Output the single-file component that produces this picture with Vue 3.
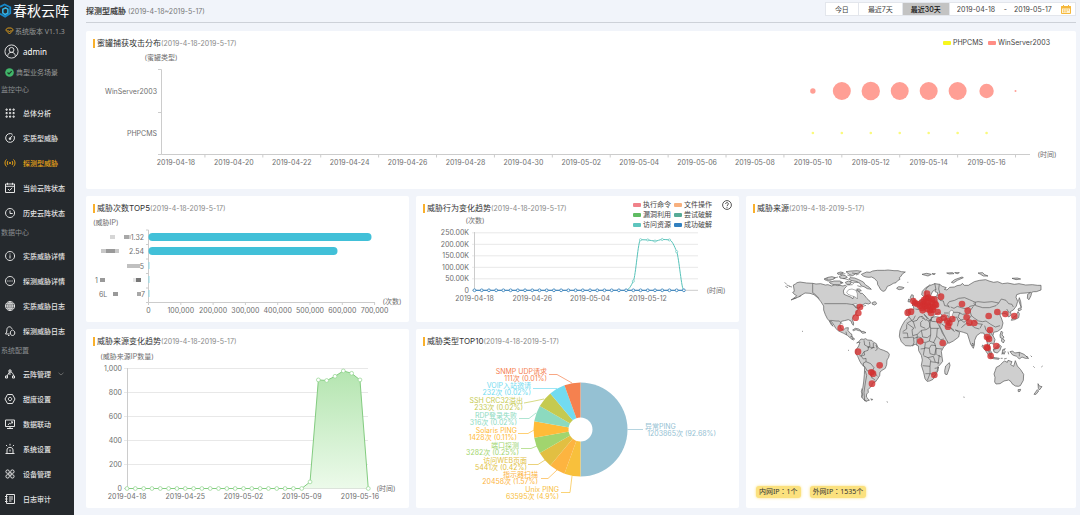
<template>
  <div class="layout">
    <aside class="sidebar">
      <div class="logo">
        <svg viewBox="0 0 14 16" width="13" height="16" fill="none">
          <path d="M0 3.5 5 1l6 3v6.5L5.5 14 0 11" stroke="#1687c9" stroke-width="2" />
          <path d="M5.5 4.5 8.5 6v4l-3 1.8L3 10V6.2l3-1.5" stroke="#35b5e8" stroke-width="1.6" />
        </svg>
        <span>春秋云阵</span>
      </div>
      <div class="version">
        <svg viewBox="0 0 9 8" width="9" height="8" fill="none" stroke="#d99a1c">
          <path d="M2.5 1h4L8.3 3 4.5 7 .7 3ZM2.5 3l2 2 2-2" />
        </svg>
        <span>系统版本 V1.1.3</span>
      </div>
      <div class="user">
        <svg viewBox="0 0 16 16" width="15" height="15" fill="none" stroke="#e8e8e8">
          <circle cx="8" cy="8" r="7" />
          <circle cx="8" cy="6.3" r="2.6" />
          <path d="M4 12.6c.3-2.4 1.6-3.7 4-3.7s3.7 1.3 4 3.7" />
        </svg>
        <span>admin</span>
      </div>
      <div class="scene">
        <svg viewBox="0 0 9 9" width="9" height="9">
          <circle cx="4.5" cy="4.5" r="4.3" fill="#41b56a" />
          <path d="m2.5 4.5 1.5 1.5 2.7-2.8" fill="none" stroke="#1d3a28" stroke-width="1.2" />
        </svg>
        <span>典型业务场景</span>
      </div>
      <nav>
        <template v-for="group in menu" :key="group.title">
          <h3 class="group-title">{{ group.title }}</h3>
          <a
            v-for="item in group.items"
            :key="item.label"
            href="#"
            class="menu-item"
            :class="{ active: item.active }"
          >
            <svg viewBox="0 0 12 12" width="12" height="12" fill="none" stroke="currentColor">
              <path :d="icons[item.icon]" />
            </svg>
            <span>{{ item.label }}</span>
            <svg v-if="item.arrow" viewBox="0 0 6 4" width="6" height="4" fill="none" stroke="#777">
              <path d="m.5.8 2.5 2.2L5.5.8" stroke-width=".8" />
            </svg>
          </a>
        </template>
      </nav>
    </aside>

    <main class="main">
      <header class="topbar">
        <h1>探测型威胁 <small>(2019-4-18~2019-5-17)</small></h1>
        <div class="range">
          <button
            v-for="r in ranges"
            :key="r"
            type="button"
            :class="{ selected: r === range }"
            @click="range = r"
          >{{ r }}</button>
          <div class="dates">
            <input v-model="start" type="text" aria-label="开始日期">
            <span>-</span>
            <input v-model="end" type="text" aria-label="结束日期">
            <button type="button" class="calendar" aria-label="选择日期">
              <svg viewBox="0 0 10 9" width="10" height="9">
                <path d="M.5 1.5h9v7h-9Z" fill="#fff3d6" stroke="#f5b83d" />
                <path d="M.5 1.5h9v1.5h-9ZM2.5 0v2M7.5 0v2" fill="#f5b83d" stroke="#f5b83d" />
                <path d="M2 5h1.5M4.3 5h1.5M6.5 5H8M2 6.8h1.5M4.3 6.8h1.5" stroke="#f5b83d" />
              </svg>
            </button>
          </div>
        </div>
      </header>

      <div class="board">
        <section class="card wide">
          <div class="card-head">
            <h2>蜜罐捕获攻击分布<small>{{ period }}</small></h2>
            <ul class="legend inline">
              <li><i class="yellow"></i>PHPCMS</li>
              <li><i class="salmon"></i>WinServer2003</li>
            </ul>
          </div>
          <svg class="chart" viewBox="0 0 990 138">
            <path class="axis" d="M75.5 18.5V103.5H944M72 18.5h3.5M72 61.5h3.5M72 103.5h3.5" />
            <path v-for="n in 15" :key="n" class="axis" :d="`M${bandX(2 * n - 1)} 103.5v3`" />
            <text x="75" y="6" class="mid">(蜜罐类型)</text>
            <text x="71" y="40" class="end">WinServer2003</text>
            <text x="71" y="82" class="end">PHPCMS</text>
            <text v-for="n in 15" :key="n" :x="bandX(2 * n - 2)" y="111" class="mid">{{ day(2 * n - 2) }}</text>
            <text x="961" y="103" class="mid">(时间)</text>
            <circle v-for="(r, i) in winServer" :key="i" :cx="bandX(22 + i)" cy="40" :r="r" fill="#ff9f95" />
            <circle v-for="n in 7" :key="n" :cx="bandX(21 + n)" cy="82" r="1.3" fill="#fafa7c" />
          </svg>
        </section>

        <section class="card">
          <div class="card-head">
            <h2>威胁次数TOP5<small>{{ period }}</small></h2>
          </div>
          <svg class="chart" viewBox="0 0 323 106">
            <path class="axis" d="M62.5 14V86.5H289" />
            <path v-for="n in 6" :key="n" class="axis" :d="`M60 ${14.5 * n - 0.5}h2.5`" />
            <g v-for="n in 8" :key="n">
              <path class="axis" :d="`M${30.2 + 32.3 * n} 86.5v2.5`" />
              <text :x="30.2 + 32.3 * n" y="94" class="mid">{{ ((n - 1) * 100000).toLocaleString('en-US') }}</text>
            </g>
            <rect x="62.5" y="17" width="223" height="8" rx="4" fill="#41c0d8" />
            <rect x="62.5" y="31" width="189" height="8" rx="4" fill="#41c0d8" />
            <path d="M63 46v7M63 60v7M63 74v7" stroke="#8edbe8" />
            <text x="7" y="6">(威胁IP)</text>
            <text x="58" y="21" class="end">1.32</text>
            <text x="58" y="35" class="end">2.54</text>
            <text x="58" y="50" class="end">5</text>
            <text x="9" y="64">1</text>
            <text x="13" y="78">6L</text>
            <text x="59" y="78" class="end">7</text>
            <rect
              v-for="(m, i) in masks"
              :key="i"
              :x="m[0]"
              :y="m[1]"
              :width="m[2]"
              height="4"
              :fill="m[3]"
            />
            <text x="306" y="85" class="mid">(次数)</text>
          </svg>
        </section>

        <section class="card">
          <div class="card-head">
            <h2>威胁行为变化趋势<small>{{ period }}</small></h2>
          </div>
          <ul class="legend stacked">
            <li v-for="l in behaviors" :key="l.name"><i :class="l.color"></i>{{ l.name }}</li>
          </ul>
          <button type="button" class="help" aria-label="帮助">
            <svg viewBox="0 0 10 10" width="10" height="10" fill="none" stroke="#444" stroke-width=".9">
              <circle cx="5" cy="5" r="4.4" />
              <path d="M3.6 4c0-1.900 2.800-1.900 2.800-.1C6.400 4.900 5 5 5 6.200M5 7v.9" />
            </svg>
          </button>
          <svg class="chart" viewBox="0 0 323 106">
            <g v-for="n in 6" :key="n">
              <path :class="n === 1 ? 'axis' : 'grid'" :d="`M56 ${85.8 - 11.5 * n}H282`" />
              <text x="53" :y="85.8 - 11.5 * n" class="end">{{ n === 1 ? 0 : (n - 1) * 50 + '.00K' }}</text>
            </g>
            <path class="axis" d="M58.5 16V74" />
            <text x="59" y="4" class="mid">(次数)</text>
            <text v-for="n in [0, 8, 16, 24]" :key="n" :x="58.5 + 7.22 * n" y="82" class="mid">{{ day(n) }}</text>
            <text x="300" y="74" class="mid">(时间)</text>
            <path d="M58.5 74.3H268" stroke="#2b7bb9" />
            <path :d="smooth(visits)" fill="none" stroke="#56c2b9" />
            <circle
              v-for="(p, i) in visits.slice(1, -1)"
              :key="'v' + i"
              :cx="p[0]"
              :cy="p[1]"
              r="1.1"
              fill="#fff"
              stroke="#56c2b9"
              stroke-width=".6"
            />
            <circle
              v-for="n in 30"
              :key="n"
              :cx="51.28 + 7.22 * n"
              cy="74.3"
              r="1.4"
              fill="#fff"
              stroke="#2b7bb9"
              stroke-width=".8"
            />
          </svg>
        </section>

        <section class="card map-card">
          <div class="card-head">
            <h2>威胁来源<small>{{ period }}</small></h2>
          </div>
          <svg class="chart" viewBox="18 63 990 792">
            <g class="land">
              <path v-for="(d, i) in land" :key="i" :d="d" />
            </g>
            <path v-for="(d, i) in lakes" :key="'l' + i" :d="d" class="lake" />
            <path v-for="(d, i) in borders" :key="'b' + i" :d="d" class="border" />
            <circle v-for="(p, i) in sources" :key="'s' + i" :cx="p[0]" :cy="p[1]" r="10" class="source" />
          </svg>
          <div class="tags">
            <span>内网IP：1个</span>
            <span>外网IP：1535个</span>
          </div>
        </section>

        <section class="card">
          <div class="card-head">
            <h2>威胁来源变化趋势<small>{{ period }}</small></h2>
          </div>
          <svg class="chart" viewBox="0 0 323 159">
            <defs>
              <linearGradient id="area" x1="0" y1="0" x2="0" y2="1">
                <stop offset="0" stop-color="#b4e5b0" />
                <stop offset="1" stop-color="#ecfaea" />
              </linearGradient>
            </defs>
            <g v-for="n in 6" :key="n">
              <path :class="n === 1 ? 'axis' : 'grid'" :d="`M38 ${163.5 - 24 * n}H282`" />
              <text x="36" :y="163.5 - 24 * n" class="end">{{ ((n - 1) * 200).toLocaleString('en-US') }}</text>
            </g>
            <path class="axis" d="M41.5 19V139" />
            <text x="41" y="7" class="mid">(威胁来源IP数量)</text>
            <text v-for="n in [0, 7, 14, 21, 28]" :key="n" :x="41 + 8.32 * n" y="147" class="mid">{{ day(n) }}</text>
            <text x="300" y="139" class="mid">(时间)</text>
            <polygon :points="ipPoints" fill="url(#area)" />
            <polyline :points="ipPoints" fill="none" stroke="#83cc80" />
            <circle
              v-for="(p, i) in ips"
              :key="i"
              :cx="p[0]"
              :cy="p[1]"
              r="1.9"
              fill="#fff"
              stroke="#8fd48c"
              stroke-width=".7"
            />
          </svg>
        </section>

        <section class="card">
          <div class="card-head">
            <h2>威胁类型TOP10<small>{{ period }}</small></h2>
          </div>
          <svg class="chart" viewBox="0 0 323 159">
            <path d="M164.5 33.5a47 47 0 0 1 0 94Z" fill="#95c1d3" />
            <path d="M211.5 80.5H227" stroke="#95c1d3" stroke-width=".7" />
            <text x="229" y="77" fill="#95c1d3" class="tinted">异常PING</text>
            <text x="300" y="84" fill="#95c1d3" class="tinted end">1203865次 (92.68%)</text>
            <g v-for="(s, i) in slices" :key="s.name">
              <path :d="slicePath(i)" :fill="s.color" />
              <polyline :points="s.line" fill="none" :stroke="s.color" stroke-width=".7" />
              <text :x="s.x" :y="s.y" :fill="s.color" class="tinted end">{{ s.name }}</text>
              <text :x="s.x" :y="s.y + 7" :fill="s.color" class="tinted end">{{ s.value }}</text>
            </g>
            <circle cx="164.5" cy="80.5" r="12" fill="#fff" />
          </svg>
        </section>
      </div>
    </main>
  </div>
</template>

<script setup>
import { ref } from 'vue'

const period = '(2019-4-18-2019-5-17)'
const ranges = ['今日', '最近7天', '最近30天']
const range = ref('最近30天')
const start = ref('2019-04-18')
const end = ref('2019-05-17')

const menu = [
  {
    title: '监控中心',
    items: [
      { label: '总体分析', icon: 'grid' },
      { label: '实质型威胁', icon: 'gauge' },
      { label: '探测型威胁', icon: 'signal', active: true },
      { label: '当前云阵状态', icon: 'calendar' },
      { label: '历史云阵状态', icon: 'clock' }
    ]
  },
  {
    title: '数据中心',
    items: [
      { label: '实质威胁详情', icon: 'info' },
      { label: '探测威胁详情', icon: 'dots' },
      { label: '实质威胁日志', icon: 'globe' },
      { label: '探测威胁日志', icon: 'bell' }
    ]
  },
  {
    title: '系统配置',
    items: [
      { label: '云阵管理', icon: 'nodes', arrow: true },
      { label: '甜度设置', icon: 'hexagon' },
      { label: '数据联动', icon: 'monitor' },
      { label: '系统设置', icon: 'alarm' },
      { label: '设备管理', icon: 'clover' },
      { label: '日志审计', icon: 'book' }
    ]
  }
]

const icons = {
  grid: [2, 5.5, 9].map((y) => [2, 5.5, 9].map((x) => `M${x} ${y}h1.2v1.200h-1.200Z`).join('')).join(''),
  gauge: 'M8.5 2.3A4.4 4.4 0 1 0 10 4M5.500 6.800 8.500 3.500M5.300 6h1.400v1.400H5.300Z',
  signal: 'M2.5 2.5c-2 2-2 5 0 7M9.5 2.5c2 2 2 5 0 7M4 4c-1 1-1 3 0 4M8 4c1 1 1 3 0 4M5.5 5.5h1v1h-1Z',
  calendar: 'M1.5 2h9v8.5h-9ZM1.5 4.3h9M3.5.8v2M8.5.8v2M4 7l1.5 1.5L8.3 5.8',
  clock: 'M6 1.5a4.5 4.5 0 1 0 .1 0M6 3.5v3h2.7',
  info: 'M6 1.5a4.5 4.5 0 1 0 .1 0M6 5.3v3.2M6 3.5v1',
  dots: 'M6 1.5a4.5 4.5 0 1 0 .1 0M3.3 6h1.2M5.4 6h1.2M7.5 6h1.2',
  globe: 'M6 1.5a4.5 4.5 0 1 0 .1 0M6 1.5v9M1.5 6h9M2.4 3.8h7.2M2.4 8.2h7.2M6 1.5c-3 2.5-3 6.5 0 9M6 1.5c3 2.5 3 6.5 0 9',
  bell: 'M8 3.8C7 .8 3 1.3 2.9 4.5L2.7 7 1.5 9h4M4 10.5h1.5M8.5 5c1.5.5 2.3 1.5 2.3 3S9.8 10.5 8.5 10.5 6.3 9.5 6.3 8 7 5.5 8.5 5',
  nodes: 'M5 2h2v2H5ZM1.5 8h2v2h-2ZM8.5 8h2v2h-2ZM5.5 4 3 8M6.5 4c2 .5 3 2 3 4M5.8 4.5 6 7',
  hexagon: 'M3.5 1.5h5L11 6l-2.5 4.5h-5L1 6ZM6 4.3a1.7 1.7 0 1 0 .1 0',
  monitor: 'M1.5 2h9v6.5h-9ZM3 10.5h6M6 8.5v2M4 7l1.5-1.8 1 .8L8.5 3.8M7 3.8h1.5v1.5',
  alarm: 'M1.5 10.5h9M3 10V7c0-3.5 6-3.5 6 0v3M6 6.5v2M6 .8v1.7M2 2l1.2 1.2M10 2 8.800 3.200',
  clover: 'M5.3 5.3H3.4A1.7 1.7 0 1 1 5.3 3.5ZM6.7 5.3V3.5A1.7 1.7 0 1 1 8.6 5.3ZM5.3 6.7v1.9A1.7 1.7 0 1 1 3.4 6.7ZM6.7 6.7h1.9A1.7 1.7 0 1 1 6.7 8.6Z',
  book: 'M2.5 1.5h8v9h-8ZM1 3.5h2.5M1 6h2.5M1 8.5h2.5M5 4h4M5 6h4M5 8h2.5'
}

const behaviors = [
  { name: '执行命令', color: 'red' },
  { name: '文件操作', color: 'orange' },
  { name: '漏洞利用', color: 'green' },
  { name: '尝试破解', color: 'jade' },
  { name: '访问资源', color: 'teal' },
  { name: '成功破解', color: 'blue' }
]

// 从 2019-04-18 起的第 n 天
function day(n) {
  return new Date(Date.UTC(2019, 3, 18 + n)).toISOString().slice(0, 10)
}

const bandX = (i) => 75.5 + 28.95 * (i + 0.5)
const winServer = [2.7, 9, 9.2, 9, 9, 9, 7.2, 1]

// 打码的 IP 片段: x, y, 宽, 颜色
const masks = [
  [24, 19, 5, '#d6d6d6'],
  [38, 19, 5, '#a8a8a8'],
  [43, 19, 2, '#d0d0d0'],
  [15, 33, 5, '#c8c8c8'],
  [20, 33, 9, '#999'],
  [29, 33, 4, '#c8c8c8'],
  [41, 48, 13, '#c0c0c0'],
  [14, 62, 5, '#999'],
  [47, 62, 3, '#e6e6e6'],
  [50, 62, 5, '#777'],
  [27, 76, 5, '#999'],
  [51, 76, 4, '#a8a8a8']
]

const visits = [0, 40, 220, 219, 214, 221, 219, 168, 0].map((v, i) => [
  58.5 + 7.22 * (i + 21),
  74.3 - v * 0.23
])

// 单调平滑曲线
function smooth(pts) {
  const slope = (i) => (pts[i + 1][1] - pts[i][1]) / (pts[i + 1][0] - pts[i][0])
  const tangent = (i) => {
    if (i === 0 || i === pts.length - 1) return 0
    const a = slope(i - 1)
    const b = slope(i)
    return a * b <= 0 ? 0 : (2 * a * b) / (a + b)
  }
  let d = `M${pts[0][0]} ${pts[0][1]}`
  for (let i = 0; i < pts.length - 1; i++) {
    const [x1, y1] = pts[i]
    const [x2, y2] = pts[i + 1]
    const dx = (x2 - x1) / 3
    d += `C${x1 + dx} ${y1 + dx * tangent(i)} ${x2 - dx} ${y2 - dx * tangent(i + 1)} ${x2} ${y2}`
  }
  return d
}

const ips = [...Array(22).fill(0), 55, 905, 900, 935, 980, 960, 905, 0].map((v, i) => [
  41 + 8.32 * i,
  139.5 - v * 0.12
])
const ipPoints = ips.map((p) => p.join(',')).join(' ')

const slices = [
  { name: 'Unix PING', value: '63595次 (4.9%)', color: '#f8c03c', x: 143, y: 140, line: '145,143.5 154,143.5 156,127' },
  { name: '指示器扫描', value: '20458次 (1.57%)', color: '#fdb440', x: 122, y: 125, line: '125,129.5 132,129.5 141,121' },
  { name: '访问WEB页面', value: '5441次 (0.42%)', color: '#e2bf42', x: 111, y: 111, line: '112,115.5 122,115.5 129,111' },
  { name: '端口探测', value: '3282次 (0.25%)', color: '#a1d56e', x: 103, y: 96, line: '105,99.5 115,99.5 121,97' },
  { name: 'Solaris PING', value: '1428次 (0.11%)', color: '#ffbb38', x: 101, y: 81, line: '102,84.5 112,84.5 118,81' },
  { name: 'RDP登录失败', value: '316次 (0.02%)', color: '#8cdabf', x: 101, y: 66, line: '103,69.5 113,69.5 120,64' },
  { name: 'SSH CRC32溢出', value: '233次 (0.02%)', color: '#c5ca50', x: 107, y: 51, line: '108,54 116,52.5 128,50' },
  { name: 'VOIP入站邀请', value: '232次 (0.02%)', color: '#72dbf0', x: 115, y: 36, line: '117,39.5 141,39.5' },
  { name: 'SNMP UDP请求', value: '111次 (0.01%)', color: '#f5814f', x: 131, y: 22, line: '133,25.5 141,25.5 156,34' }
]

function slicePath(i) {
  const at = (deg) => {
    const a = (deg * Math.PI) / 180
    return `${164.5 + 47 * Math.sin(a)} ${80.5 - 47 * Math.cos(a)}`
  }
  return `M164.5 80.5L${at(180 + 20 * i)}A47 47 0 0 1 ${at(200 + 20 * i)}Z`
}

const land = [
  // 北美
  'M160 270l6-3 5-4 9-2 6 1 14 2 18 1 10 2 14-1 14 4 8-1 11 4 10-4 8 3 7-1 9 2 7-3 4 4-6 6-4 8 2 10 12 5 10 4 4 5 3-7-3-8 4-8 8-3 7 3 4 6 6 0 8 8 6 8 9 8 3 4-7 4-10-2-9 5-8 5-2 6-5 4-2 9-6 7-5 5-2 8 4 10-1 7-4-5-3-8-8-4-12 3-9 2-4 9 2 12 8 5 7-6 8-1-1 9 7 8 4 2 1 10 8 5-4 3-9-6-9-8-11-6-15-7-9-8-4-8-9-13-5-3 6 10 4 8-5-5-7-12-5-6-6-12-5-14 0-12-9-14-9-11-11-9-12-4-15-1-10 6-10 6-14 6-8 3 12-8 5-5-7-4-5-6 5-3z',
  'M368 236l12-5 10 1 8-4 14-2 22 0 10-1 18 2 12 0 10 3 12 1-8 5-6 9-4 3 2 5-7 4-5 6-8 2-10 6-8 3-3 7-5 7-5 1-7-5-5-9-4-6-1-9-8-9-9-5-8 1-9-1-8-3-6-5z',
  'M318 230l14-2 20-1 12 2-8 5-10 3-8 5-9-3-5-4z',
  'M252 252l12-5 12-2 10 3-6 5-12 2-10 1z',
  'M268 262l14-4 18 0 8 5-10 6-16 0-10-3z',
  'M298 244l10-4 8 2 6 5-10 4-12-2z',
  'M330 248l14 1 12 5 14 7 6 8 12 8 6 6-12-2-10-6-8-2-4-8-12-6-12-2-10-4z',
  'M316 262l10-4 8 4-4 6-10 0z',
  'M350 282l8 0 6 5-8 2z',
  'M292 234l10-3 8 2-6 4-10 1z',
  'M470 279l6-4 10 1 6 2-4 4-10 2-6-2z',
  'M398 322l8-2 4 6-6 4-8-3z',
  'M338 405l8-5 10 2 8 6-8-1-8-3-8 3z',
  'M362 410l8-1 8 4-10 2z',
  // 南美
  'M350 444l6-4 7-8 8 1 6-2 6 4 12 1 6 6 8 4 4 10 6 6 12 4 13 6 4 6-2 9-5 8-1 14-4 11-10 6-6 5-1 11-7 11-6 8-9 4-1 6-6 7-6 6 1 8-5 5-1 9 5 5 4 5-9 2-9-5-5-8 1-14 2-10 3-20 2-22 1-24-9-7-6-10-6-14-6-9 1-10 8-12 4-12z',
  'M392 612l6 1-2 3z',
  // 非洲
  'M508 364l10-4 16-2 11 2 2 10 12 3 6 5 10-4 15 1 5 13 8 16 5 12 7 9 16 0 0 5-8 14-12 12-7 13 2 16 2 14-8 10-6 6 0 12-7 12-8 14-10 5-8 1-6-8-4-18-7-22 3-16-3-14-8-14-1-14-9-5-14 5-16-1-12-12-6-16 2-18 6-14 8-14z',
  'M628 503l2 8-4 14-5 14-6-2-1-10 3-14z',
  // 欧亚大陆
  'M500 356l0-13 22 0-2-9-4-4 13-5 9-7 9-5 9-1 2-8 4 0 0 6 11 0 9-4 9-3 2-10-8-3 2-7-9 6-6 12-4 8-7-5-9 1-7-6 2-10 10-11 12-6 16-6 14 2 8 6 12 4-6 5 8 2 8-8 14-1 8-4 12-2 4-5 6 6 12 0 8-5 10-6 16-4 18-2 10 4 14 4 12-2 14 6 16-2 20 4 14-2 20 4 20-1 16 2 10 0 0 14-14 5-8 0-6 2-2 10-6 12-5-4 1-12 9-6-14 2-16 1-12 4-2 8 5 12-4 14-9 12-9 5 3 10-8 6-6-9-9-2-12 3 5 11 5 15-4 16-12 9-12 3-2 10 6 12-4 14-8-4-6 6 3 15 6 9-2 5-8-13-3-14-3-18-9-20-10 0-11 8-6 14-1 14-3 10-8-12-5-16-5-16-12-4-14-4-10-3 13 7-3 14-16 12-14 7-7-11-8-16-6-13-6-12 2-12-14-1-12-1-2-11 13-3 17 2 4-6-10-8-13 6-8 10-6 8-8-10-10-9 11 14-6 4-10-12-10 2-6 10-13 4z',
  'M516 326l5-5-6-5-4-9 4-8 5 2 0 8 5 8 5 5-3 5z',
  'M504 320l2-8 5 2-1 7z',
  'M634 262l10-8 22-8 4 2-18 8-12 8z',
  'M546 238l14-3 14 3-10 5-8-2z',
  'M576 236l10 0-4 3z',
  'M620 234l18-1 4 3-14 1zM644 233l14 0-6 3z',
  'M714 234l14-1 6 6 10 4-14 0-8-5z',
  'M816 250l16-1 10 3-14 2z',
  'M838 308l4 12 2 18-4-10-4-12z',
  'M834 342l8-4 2 6-8 4zM834 350l4 6-2 12-12 6-10 2 4-8 10-6z',
  // 东南亚与大洋洲
  'M728 450l8 8 10 12 8 14-6 0-12-18-10-12zM752 486l14 2 12 2-2 3-16-2-10-3z',
  'M760 462l8-4 8-10 8 6-4 12-8 8-10-3z',
  'M788 464l8-3-4 5 4 4-4 8-3-6-3 6zM780 420l4-12 4 4-2 8 6 6-4 6 6 4-4 8-6-6 2-8-5-2z',
  'M810 470l8-2 6 6 14-2 14 6 14 12-10 0-10-4-8 6-8-8-12-4z',
  'M698 444l3 5-2 4-3-4z',
  'M782 490l6 0M792 492l8-2M804 470l2 8M872 482l4 4M880 514l4 4M904 516l4-3',
  'M766 526l3-9 11-6 8-9 6-4 8 4 2-6 12 4-4 9 9 5 5-17 6 16 10 11 9 14-1 18-9 16-6 2-9-1-10-7-3-6-7-5-14 3-12 8-12 1-4-6 1-14-3-10z',
  'M834 584l8-1-2 6-5 1z',
  'M894 566l4 7 8 2-8 10-3-5zM892 584l4 4-8 10-6 0z'
]

const lakes = [
  'M320 292l6-8 10-2 12 4 4 10 0 16-6-6-12-4-10-4z',
  'M628 350l8-5 5 6-4 8 3 12-6 1-6-10z',
  'M338 328l10-2 6 4-8 3zM346 336l6-1 0 6z'
]

const borders = [
  'M253 326H320l20 3 6 8 10 2 8-4 14-4M218 265v28l6 4 14 14M272 376l16 2 10 0 10 10M318 410l2 10M330 426l8-2M336 434l4-6',
  'M256 252l8 0M262 258l12 0M280 250l14-4M300 238l16-2M310 250l14 4M322 240l12 4M336 234l14 2M330 258l12 8M340 262l14 0M348 240l10-4M300 262l10 2M322 270l16-1M352 272l12 4',
  'M134 262l6 6M140 270l10 4M148 274l8 2M136 274l8 4M160 312l10-4M176 306l8-4',
  'M372 436l2 14 12 6-2 10-12 4 2 10-12 4M388 440l2 14-8 4M400 444l0 14-8 4M408 450l4 12-6 6M384 456l20 2M372 470l-8 12-6 0M364 484l6 8 8-2 0 10-8 4 0 10M378 500l14 6 10 12-4 8-16 2-6-10-6-6M376 528l4 14-4 22-4 28 2 24M398 526l8 10 6 8M396 548l10 8M392 536l4 14M366 580l-2 10 4 8-3 10M372 616l8 4',
  'M526 362l-6 12-18 10M500 384l22 16-6 4 2 18 14-4 12-12 14-2 10-6 4-26M548 376l-6 6 0 12 14 6M526 400l-6-20M500 388l0 14-12 8M488 414l14 0 2 14-14 0M504 428l16-2 2 16-4 12M522 430l12-4 10 2 4 14M532 418l-2 32M544 406l4 20 14 2 10-8 0-20M566 374l6 26 26 0M572 420l-4 18 16 6 4 16 18 2M548 442l10 0 10-4M592 400l-2 24 12 10 10-2M590 424l-10 20M556 444l-2 14 14 2 6-10 14 2M542 462l14-2M554 458l-4 22M568 460l2 16 14 4 4-20M550 482l14 6 16-4 6 18 12 2M548 512l22 2 2-18-8-8M570 514l0 22 10 2 12-12 4-10M570 536l-8 20M556 536l14 0M584 520l12-2M592 480l12 6M588 460l0 20M580 546l8-8M572 500l14 2M598 480l-4 28',
  'M570 268l-12 14-2 18M584 264l4 20M598 268l-2 14 4 14-4 8M592 306l8 10 10 2 4 14 14 2M556 312l4 24M570 310l2 30M584 308l-2 36M540 320l16 10 40 4M548 342l30-6M526 342l12 2',
  'M628 338l-6-10 6-8 16-4 12-6 18-2 14 6 18 8 0 8-16 4-10 8-16-4-12-4-10 6-10-4M704 322l10-2 18 2 24-2 20 4-8 8-20 6-20 0-20-6-8-8M776 324l8-12 14 4 8 10 10 2 4 8M700 334l-10 14 4 14 10 8 12 8 12 2 10-2 14 10 14 8 14-4M660 352l-6 14 8 8 10 8 16-12 6-8M640 368l10-2 6 14M652 394l4-16 16-6M664 398l16-14 14 6 10 8 14 4M700 376l14 10 14 2M726 388l-6 12M734 392l4 14M738 406l8 6 8 16-6 4-8-6M740 426l10 14M746 404l12 18M640 352l14 0 14 6 12-2M600 366l14-2 8 10 10 16M596 372l8 6 10-6M604 386l14 10 14 2 10 8M622 360l6 10M612 354l14 0M632 400l12 10',
  'M800 342l8 12M760 466l20-12M838 472v12M186 408l3 2M324 466l3 0M440 620l4 2M670 606l4 1M502 262l3 0M858 484l6 2'
]

const sources = [
  [360, 336], [355, 354], [347, 368], [302, 399],
  [354, 470], [419, 511], [394, 532], [399, 536], [396, 566],
  [541, 439], [608, 444], [583, 540],
  [503, 353], [513, 350],
  [561, 296], [603, 305], [520, 318], [525, 324], [532, 327], [540, 332],
  [546, 322], [552, 315], [558, 310], [565, 308], [574, 312], [583, 314],
  [550, 328], [558, 322], [566, 320], [575, 324], [585, 326], [546, 338],
  [548, 346], [556, 334], [564, 332], [572, 336], [580, 336], [588, 330],
  [562, 342], [570, 346], [578, 344], [573, 354], [593, 351],
  [598, 376], [612, 368], [622, 378], [637, 372], [628, 384], [624, 395],
  [666, 327], [683, 347], [680, 367], [688, 383], [703, 384],
  [746, 363], [772, 351], [796, 357], [823, 363],
  [750, 405], [741, 426], [747, 432], [743, 459], [740, 457], [769, 453], [752, 483]
]
</script>

<style>
body {
  margin: 0;
}
</style>

<style scoped>
.layout {
  display: flex;
  min-height: 100vh;
  background: #f1f4fa;
  color: #444;
  font-family: Inter, "Noto Sans CJK SC", sans-serif;
  font-size: 7px;
}

button,
input {
  font: inherit;
  color: inherit;
  border: 0;
  padding: 0;
  background: none;
}

h1,
h2,
h3,
ul {
  margin: 0;
  padding: 0;
  font-weight: 400;
  list-style: none;
}

.sidebar {
  flex: 0 0 74px;
  background: #25292d;
  color: #e4e4e4;
  font-family: "Noto Sans", "Noto Sans CJK SC", sans-serif;
}

.logo,
.version,
.user,
.scene,
.menu-item {
  display: flex;
  align-items: center;
  white-space: nowrap;
}

.logo {
  height: 22px;
  font-size: 14px;
  line-height: 22px;
  color: #fff;
}

.version {
  height: 18px;
  padding-left: 5px;
  gap: 1px;
  color: #999;
}

.user {
  height: 22px;
  padding-left: 4px;
  gap: 4px;
  font-size: 8px;
  color: #fff;
}

.scene {
  height: 20px;
  padding-left: 5px;
  gap: 2px;
  color: #999;
}

.group-title {
  height: 18px;
  padding-left: 1px;
  font-size: 7px;
  line-height: 16px;
  color: #8a8d90;
}

.menu-item {
  height: 25px;
  padding-left: 4px;
  gap: 7px;
  color: #e4e4e4;
  font-weight: 500;
  text-decoration: none;
}

.menu-item.active {
  color: #e8a317;
}

.main {
  flex: 1;
  min-width: 0;
  padding: 0 4px 7px 12px;
}

.topbar {
  display: flex;
  justify-content: space-between;
  height: 22px;
  margin-bottom: 8px;
  border-bottom: 1px solid #cdd1d8;
}

.topbar h1 {
  font-size: 8px;
  line-height: 22px;
  font-weight: 700;
}

.topbar small {
  font-size: 7px;
  font-weight: 400;
  color: #777;
}

.range {
  display: flex;
  height: 14px;
  margin-top: 2px;
  background: #fff;
  border: 1px solid #e3e6ec;
  box-sizing: border-box;
}

.range > button {
  padding: 0 9px;
  border-right: 1px solid #e3e6ec;
}

.range > button.selected {
  padding: 0 8px;
  background: #c3c3c3;
  color: #111;
  font-weight: 500;
}

.dates {
  display: flex;
  align-items: center;
  gap: 7px;
  padding: 0 4px 0 7px;
}

.dates input {
  width: 40px;
  height: 12px;
}

.calendar {
  display: flex;
}

.board {
  display: grid;
  grid-template-columns: minmax(0, 323fr) minmax(0, 323fr) minmax(0, 330fr);
  gap: 7px;
}

.card {
  position: relative;
  display: flex;
  flex-direction: column;
  background: #fff;
  border-radius: 2px;
}

.wide {
  grid-column: 1 / -1;
}

.map-card {
  grid-row: 2 / 4;
  grid-column: 3;
}

.card-head {
  display: flex;
  justify-content: space-between;
  align-items: center;
  height: 20px;
  padding: 4px 26px 0 7px;
  box-sizing: border-box;
}

.card-head h2 {
  padding-left: 2px;
  border-left: 2px solid #f9b02c;
  font-size: 8px;
  line-height: 9px;
  color: #333;
  white-space: nowrap;
}

.card-head small {
  font-size: 7px;
  color: #888;
}

.legend li {
  display: flex;
  align-items: center;
  gap: 2px;
  line-height: 10px;
  white-space: nowrap;
}

.legend i {
  width: 8px;
  height: 4px;
  border-radius: 1px;
}

.legend.inline {
  display: flex;
  gap: 5px;
}

.legend.stacked {
  position: absolute;
  top: 4px;
  right: 27px;
  display: grid;
  grid-template-columns: auto auto;
  column-gap: 3px;
}

.yellow { background: #f7f71e; }
.salmon { background: #ff8d85; }
.red { background: #f0828a; }
.orange { background: #f7b07e; }
.green { background: #5fbb62; }
.jade { background: #56ab97; }
.teal { background: #5ec5be; }
.blue { background: #3180c0; }

.help {
  position: absolute;
  top: 4px;
  right: 7px;
  display: flex;
}

.chart {
  display: block;
  width: 100%;
  height: auto;
}

.chart text {
  font-size: 7px;
  dominant-baseline: central;
}

.chart text:not(.tinted) {
  fill: #6e6e6e;
}

.chart .mid {
  text-anchor: middle;
}

.chart .end {
  text-anchor: end;
}

.axis {
  fill: none;
  stroke: #ccc;
}

.grid {
  stroke: #e8e8e8;
}

.land path {
  fill: #cfcfcf;
  stroke: #555;
  stroke-width: 2;
  stroke-linejoin: round;
}

.lake {
  fill: #fff;
  stroke: #666;
  stroke-width: 1.5;
}

.border {
  fill: none;
  stroke: #505050;
  stroke-width: 1.8;
}

.source {
  fill: #d32f2f;
  fill-opacity: .8;
}

.tags {
  display: flex;
  gap: 9px;
  margin-top: auto;
  padding: 0 10px 10px;
  font-family: "Noto Sans", "Noto Sans CJK TC", sans-serif;
}

.tags span {
  padding: 0 3px;
  line-height: 12px;
  color: #333;
  background: #fbe17e;
  border-radius: 3px;
  box-shadow: 0 0 3px #fbe17e;
}
</style>
